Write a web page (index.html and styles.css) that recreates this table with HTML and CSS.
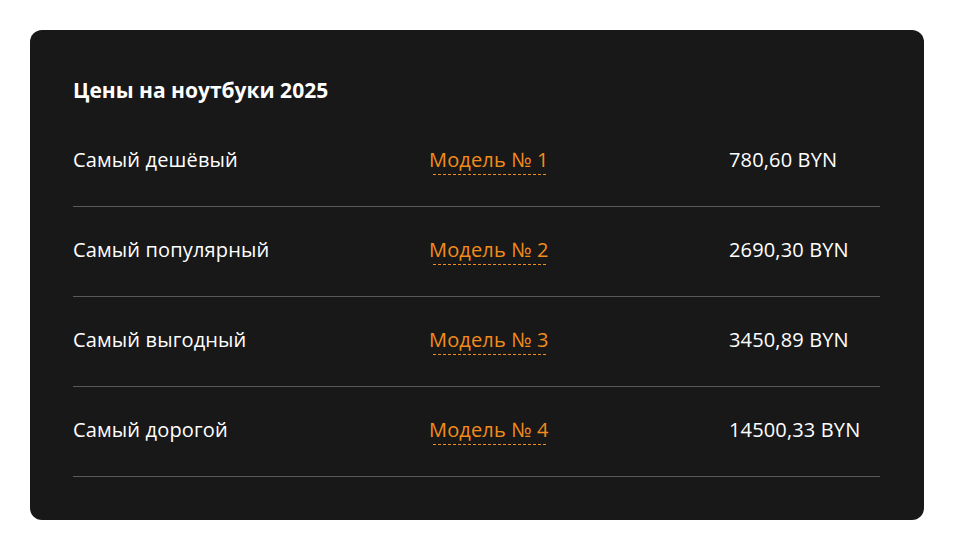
FILE: index.html
```html
<!DOCTYPE html>
<html lang="ru">
<head>
<meta charset="utf-8">
<link rel="stylesheet" href="styles.css">
</head>
<body>
<section class="card">
  <h2 class="title">Цены на ноутбуки 2025</h2>
  <div class="rows">
    <div class="row">
      <span class="label">Самый дешёвый</span>
      <a class="model" href="#">Модель № 1</a>
      <span class="price">780,60 BYN</span>
    </div>
    <div class="row">
      <span class="label">Самый популярный</span>
      <a class="model" href="#">Модель № 2</a>
      <span class="price">2690,30 BYN</span>
    </div>
    <div class="row">
      <span class="label">Самый выгодный</span>
      <a class="model" href="#">Модель № 3</a>
      <span class="price">3450,89 BYN</span>
    </div>
    <div class="row">
      <span class="label">Самый дорогой</span>
      <a class="model" href="#">Модель № 4</a>
      <span class="price">14500,33 BYN</span>
    </div>
  </div>
</section>
</body>
</html>
```
FILE: styles.css
```css
* { box-sizing: border-box; }
html, body { margin: 0; background: #ffffff; }
body {
  padding: 30px;
  font-family: "Open Sans", "Noto Sans", sans-serif;
  color: #ffffff;
}
.card {
  background: #181818;
  border-radius: 12px;
  padding: 43px 44px 43px 43px;
  height: 490px;
}
.title {
  margin: 0;
  font-size: 21px;
  font-weight: 700;
  line-height: 34px;
  height: 44px;
}
.rows { display: flex; flex-direction: column; }
.row {
  display: grid;
  grid-template-columns: 356px 300px 1fr;
  align-items: center;
  height: 90px;
  padding-bottom: 4px;
  border-bottom: 1px solid #5a5a5a;
  font-size: 20px;
  line-height: 28px;
  letter-spacing: 0.15px;
}
.model {
  position: relative;
  justify-self: start;
  color: #f28c1c;
  text-decoration: none;
}
.model::after {
  content: "";
  position: absolute;
  left: 4px;
  right: 3px;
  bottom: -1px;
  height: 1px;
  background-image: linear-gradient(to right, #f28c1c 0 3px, transparent 3px 5px);
  background-size: 5px 1px;
}
```
